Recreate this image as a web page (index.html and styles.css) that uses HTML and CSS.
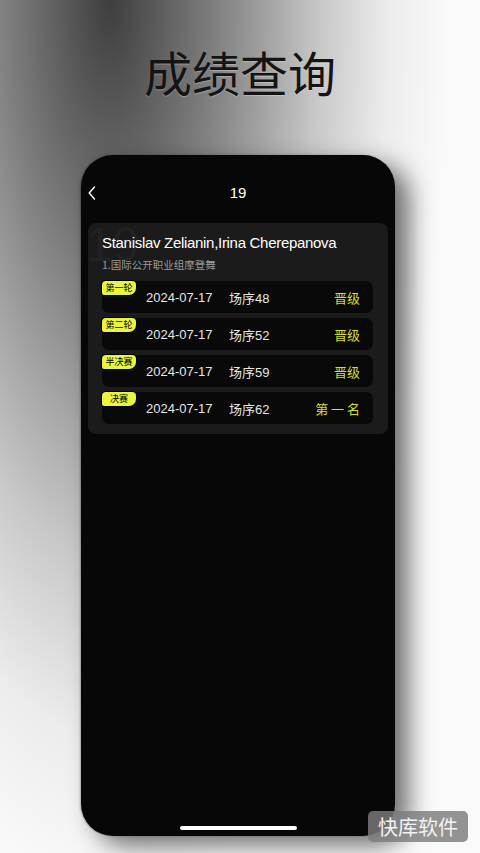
FILE: index.html
```html
<!DOCTYPE html>
<html lang="zh-CN">
<head>
  <meta charset="UTF-8">
  <meta name="viewport" content="width=device-width, initial-scale=1.0">
  <title>成绩查询</title>
  <link rel="stylesheet" href="styles.css">
</head>
<body>
  <div class="screen">
    <h1 class="title">成绩查询</h1>

    <div class="phone">
      <header class="nav">
        <svg class="back" width="8" height="14" viewBox="0 0 8 14">
          <path d="M6.5 1 L1.2 7 L6.5 13" fill="none" stroke="#fff" stroke-width="1.4" stroke-linecap="round" stroke-linejoin="round"/>
        </svg>
        <span class="nav-title">19</span>
      </header>

      <section class="card">
        <span class="card-mark">19</span>
        <h2 class="couple">Stanislav Zelianin,Irina Cherepanova</h2>
        <p class="event">1.国际公开职业组摩登舞</p>
        <ul class="rounds">
          <li class="round">
            <span class="badge">第一轮</span>
            <span class="date">2024-07-17</span>
            <span class="heat">场序48</span>
            <span class="result">晋级</span>
          </li>
          <li class="round">
            <span class="badge">第二轮</span>
            <span class="date">2024-07-17</span>
            <span class="heat">场序52</span>
            <span class="result">晋级</span>
          </li>
          <li class="round">
            <span class="badge">半决赛</span>
            <span class="date">2024-07-17</span>
            <span class="heat">场序59</span>
            <span class="result">晋级</span>
          </li>
          <li class="round">
            <span class="badge">决赛</span>
            <span class="date">2024-07-17</span>
            <span class="heat">场序62</span>
            <span class="result">第 一 名</span>
          </li>
        </ul>
      </section>

      <div class="home-bar"></div>
    </div>

    <div class="watermark">快库软件</div>
  </div>
</body>
</html>
```

FILE: styles.css
```css
body {
  margin: 0;
  padding: 0;
  font-family: "Liberation Sans", "Noto Sans CJK SC", sans-serif;
}

.screen {
  position: relative;
  width: 480px;
  height: 853px;
  overflow: hidden;
  background: radial-gradient(ellipse 340px 900px at 110px 0, #3e3e3e 0%, #888888 35%, #c8c8c8 62%, #ececec 82%, #fafafa 100%);
  background-color: #fafafa;
}

.title {
  margin: 0;
  padding-top: 47px;
  font-family: "Noto Sans CJK SC", sans-serif;
  font-size: 48px;
  line-height: 48px;
  font-weight: 400;
  text-align: center;
  color: #141414;
  text-shadow: 0 1px 1px rgba(255, 255, 255, 0.3);
}

.phone {
  box-sizing: border-box;
  width: 314px;
  height: 681px;
  margin: 60px 0 0 81px;
  padding: 0 7px;
  display: flex;
  flex-direction: column;
  background: #070707;
  border-radius: 32px;
  box-shadow: 14px 10px 24px rgba(0, 0, 0, 0.55), -1px 0 2px rgba(0, 0, 0, 0.25);
}

.nav {
  display: grid;
  grid-template-columns: 30px 1fr 30px;
  align-items: center;
  padding-top: 27px;
  height: 22px;
}

.back {
  display: block;
}

.nav-title {
  text-align: center;
  color: #fff;
  font-size: 15px;
  line-height: 22px;
}

.card {
  position: relative;
  overflow: hidden;
  margin-top: 19px;
  padding: 11px 15px 10px 14px;
  background: #1b1b1b;
  border-radius: 8px;
}

.card-mark {
  position: absolute;
  top: -2px;
  left: -2px;
  font-size: 48px;
  line-height: 48px;
  font-weight: 300;
  color: rgba(255, 255, 255, 0.045);
}

.couple {
  position: relative;
  margin: 0;
  font-size: 15px;
  line-height: 18px;
  font-weight: 400;
  letter-spacing: -0.3px;
  color: #fff;
}

.event {
  margin: 5px 0 0;
  font-family: "Noto Sans CJK SC", sans-serif;
  font-size: 10.5px;
  line-height: 16px;
  color: #9a9a9a;
}

.rounds {
  list-style: none;
  margin: 8px 0 0;
  padding: 0;
  display: flex;
  flex-direction: column;
  gap: 5px;
}

.round {
  position: relative;
  height: 32px;
  display: flex;
  align-items: center;
  padding: 0 13px 0 44px;
  background: #090909;
  border-radius: 7px;
  font-size: 13px;
  color: #e6e6e6;
}

.badge {
  position: absolute;
  top: 0;
  left: 0;
  width: 34px;
  height: 14px;
  font-family: "Noto Sans CJK SC", sans-serif;
  font-size: 9px;
  line-height: 14px;
  text-align: center;
  color: #000;
  background: #e9f53f;
  border-radius: 4px 4px 7px 2px;
  box-shadow: 0 0 0 1px #000;
}

.date {
  width: 83px;
}

.result {
  margin-left: auto;
  font-family: "Noto Sans CJK SC", sans-serif;
  color: #d3df35;
}

.home-bar {
  align-self: center;
  width: 117px;
  height: 4px;
  margin-top: auto;
  margin-bottom: 6px;
  background: #fff;
  border-radius: 2px;
}

.watermark {
  position: absolute;
  left: 368px;
  top: 811px;
  width: 100px;
  height: 31px;
  font-family: "Noto Sans CJK SC", sans-serif;
  font-size: 20px;
  line-height: 31px;
  text-align: center;
  color: #f2f2f2;
  background: rgba(125, 125, 125, 0.82);
  border-radius: 5px;
}
```
